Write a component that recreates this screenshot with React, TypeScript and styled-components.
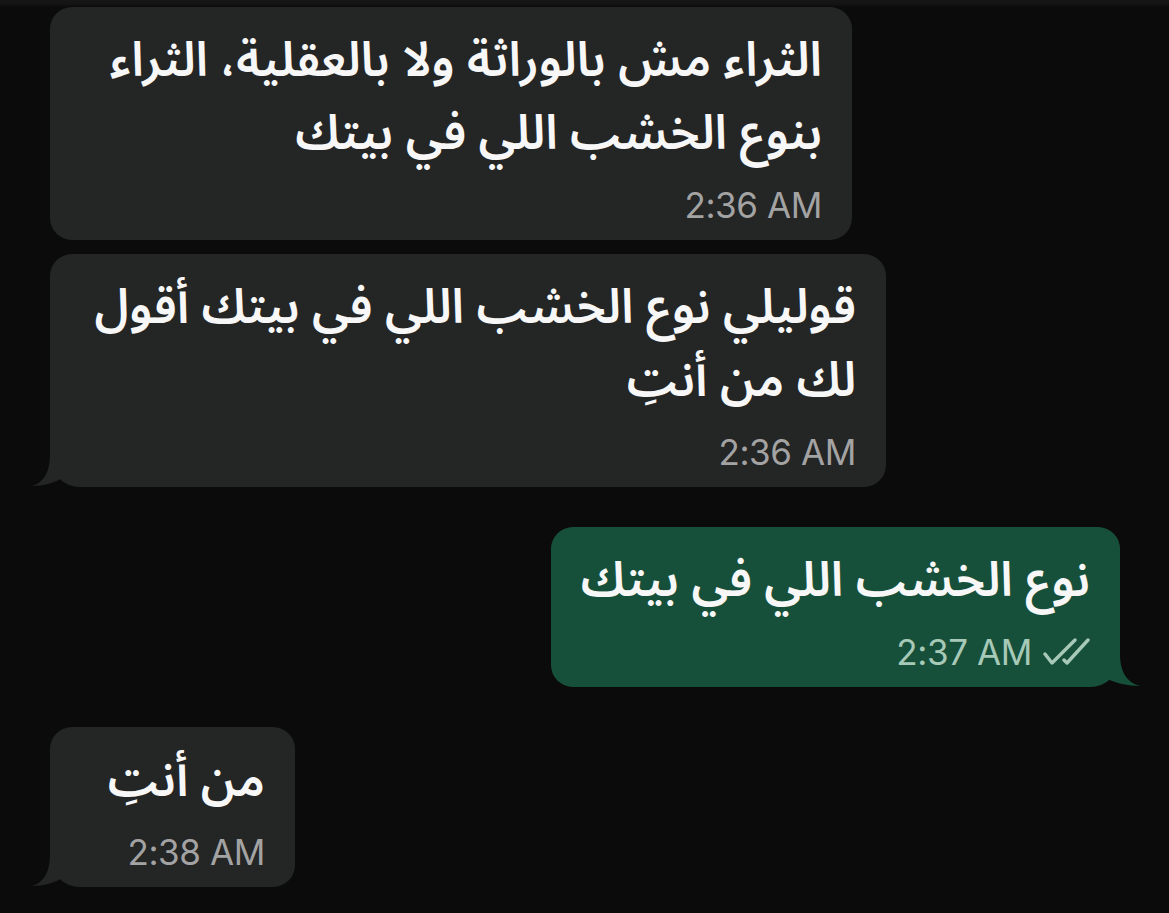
import React from "react";
import styled, { createGlobalStyle } from "styled-components";

const GlobalStyle = createGlobalStyle`
  html, body {
    margin: 0;
    padding: 0;
    background: #0b0b0b;
  }
  body {
    font-family: "Noto Sans Arabic", "Noto Naskh Arabic", "DejaVu Sans", sans-serif;
  }
`;

const Page = styled.div`
  width: 1169px;
  height: 913px;
  overflow: hidden;
  box-sizing: border-box;
  padding-top: 7px;
  display: flex;
  flex-direction: column;
  background: linear-gradient(#161616 0px, #141414 4px, #0b0b0b 7px);
`;

const Row = styled.div<{ $out?: boolean; $gap: number }>`
  display: flex;
  justify-content: ${(p) => (p.$out ? "flex-end" : "flex-start")};
  padding: 0 49px 0 50px;
  margin-top: ${(p) => p.$gap}px;
`;

const Bubble = styled.div<{ $out?: boolean; $w: number; $tail?: boolean }>`
  position: relative;
  box-sizing: border-box;
  width: ${(p) => p.$w}px;
  padding: 17px 30px 17px 30px;
  border-radius: 22px;
  ${(p) =>
    p.$tail
      ? p.$out
        ? "border-bottom-right-radius: 30px;"
        : "border-bottom-left-radius: 30px;"
      : ""}
  background: ${(p) => (p.$out ? "#17503a" : "#242525")};
  color: #f7f7f7;
`;

const Text = styled.div`
  direction: rtl;
  text-align: right;
  white-space: nowrap;
  font-family: "Noto Sans Arabic", "Noto Naskh Arabic", "DejaVu Sans", sans-serif;
  font-size: 48px;
  font-weight: 600;
  line-height: 73px;
`;

const Meta = styled.div<{ $out?: boolean }>`
  display: flex;
  justify-content: flex-end;
  align-items: center;
  gap: 11px;
  margin-top: 17px;
  height: 36px;
  font-family: Inter, "Liberation Sans", sans-serif;
  font-size: 35px;
  font-weight: 400;
  letter-spacing: -0.4px;
  color: ${(p) => (p.$out ? "#a7c9b7" : "#a3a3a3")};
`;

const Tail = styled.svg<{ $out?: boolean }>`
  position: absolute;
  bottom: 0;
  width: 30px;
  height: 34px;
  overflow: visible;
  ${(p) => (p.$out ? "right: 0;" : "left: 0;")}
`;

const TailShape: React.FC<{ out?: boolean }> = ({ out }) => (
  <Tail $out={out} viewBox={out ? "-30 -34 30 34" : "0 -34 30 34"}>
    <path
      d={
        out
          ? "M 0 -33 C 0 -14, 8 -4, 20 -1 C 8 -1, -5 -4, -12 -8 L -12 -33 Z"
          : "M 0 -33 C 0 -14, -7 -4, -18 -1 C -7 -1, 4 -4, 10 -8 L 10 -33 Z"
      }
      fill={out ? "#17503a" : "#242525"}
    />
  </Tail>
);

const Ticks = () => (
  <svg width="47" height="28" viewBox="0 0 47 28" fill="none">
    <path
      d="M 2 16 L 9 25 L 32 2"
      stroke="#a7c9b7"
      strokeWidth="3.4"
      strokeLinecap="round"
      strokeLinejoin="round"
    />
    <path
      d="M 21 22 L 24 25 L 45 2"
      stroke="#a7c9b7"
      strokeWidth="3.4"
      strokeLinecap="round"
      strokeLinejoin="round"
    />
  </svg>
);

export default function App() {
  return (
    <>
      <GlobalStyle />
      <Page>
        <Row $gap={0}>
          <Bubble $w={802}>
            <Text>
              الثراء مش بالوراثة ولا بالعقلية، الثراء
              <br />
              بنوع الخشب اللي في بيتك
            </Text>
            <Meta>2:36 AM</Meta>
          </Bubble>
        </Row>
        <Row $gap={14}>
          <Bubble $w={836} $tail>
            <Text>
              قوليلي نوع الخشب اللي في بيتك أقول
              <br />
              لك من أنتِ
            </Text>
            <Meta>2:36 AM</Meta>
            <TailShape />
          </Bubble>
        </Row>
        <Row $out $gap={40}>
          <Bubble $out $w={569} $tail>
            <Text>نوع الخشب اللي في بيتك</Text>
            <Meta $out>
              2:37 AM
              <Ticks />
            </Meta>
            <TailShape out />
          </Bubble>
        </Row>
        <Row $gap={40}>
          <Bubble $w={245} $tail>
            <Text>من أنتِ</Text>
            <Meta>2:38 AM</Meta>
            <TailShape />
          </Bubble>
        </Row>
      </Page>
    </>
  );
}
